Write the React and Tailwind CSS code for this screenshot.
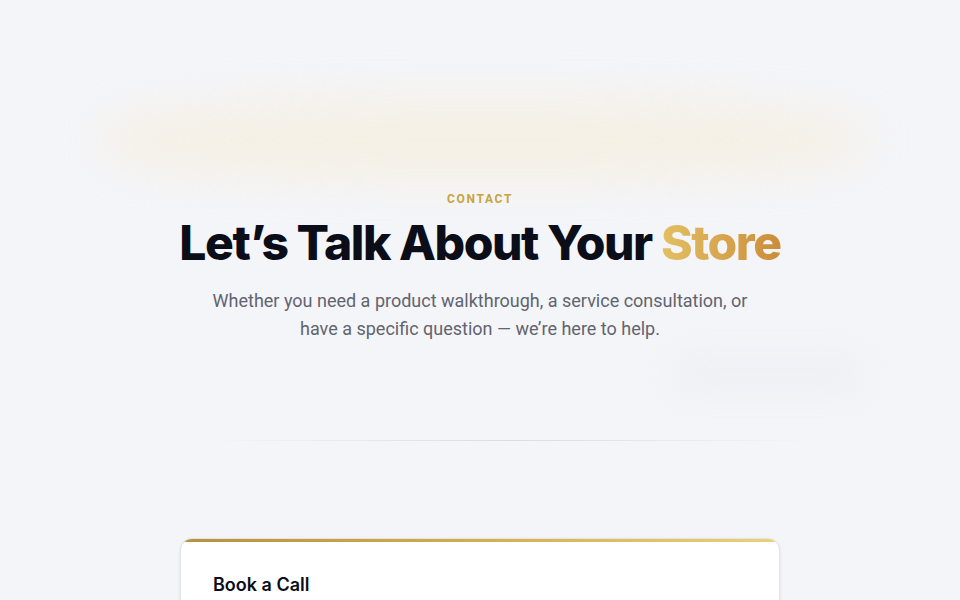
import React from 'react';

const App = () => {
  return (
    <div className="relative min-h-screen overflow-hidden bg-[#f4f5f9] font-['Inter',sans-serif]">
      {/* Decorative glows */}
      <div className="pointer-events-none absolute left-[100px] top-[100px] h-[80px] w-[770px] rounded-[40%] bg-[#f6eedb] opacity-70 blur-xl"></div>
      <div className="pointer-events-none absolute left-[670px] top-[350px] h-[48px] w-[195px] rounded-2xl bg-[#eceef3] opacity-60 blur-lg"></div>

      <section className="relative flex flex-col items-center pt-[191px] text-center">
        <span className="font-['Roboto',sans-serif] text-xs font-bold uppercase leading-4 tracking-[0.14em] text-[#c9a33c]">
          Contact
        </span>
        <h1 className="mt-2 text-5xl font-extrabold leading-[56px] tracking-[-0.03em] text-[#0b0e19]">
          Let’s Talk About Your{' '}
          <span className="bg-gradient-to-r from-[#e2c062] to-[#cc8c3a] bg-clip-text text-transparent">
            Store
          </span>
        </h1>
        <p className="mt-4 max-w-[560px] font-['Roboto',sans-serif] text-lg leading-7 text-[#61646e]">
          Whether you need a product walkthrough, a service consultation, or have a specific question — we’re here to help.
        </p>

        {/* Divider */}
        <div className="mt-[97px] ml-[60px] h-px w-[606px] bg-gradient-to-r from-transparent via-[#d9dce2] via-50% to-transparent"></div>

        {/* Card */}
        <div className="mt-[97px] h-[200px] w-[600px] overflow-hidden rounded-xl border border-[#e3e5ea] bg-white text-left shadow-sm">
          <div className="h-[3px] bg-gradient-to-r from-[#b8913f] via-[#d5ad4e] to-[#ecd07a]"></div>
          <div className="px-8 pt-[29px]">
            <h2 className="text-lg font-semibold leading-7 text-[#0b0e19]">Book a Call</h2>
          </div>
        </div>
      </section>
    </div>
  );
};

export default App;
